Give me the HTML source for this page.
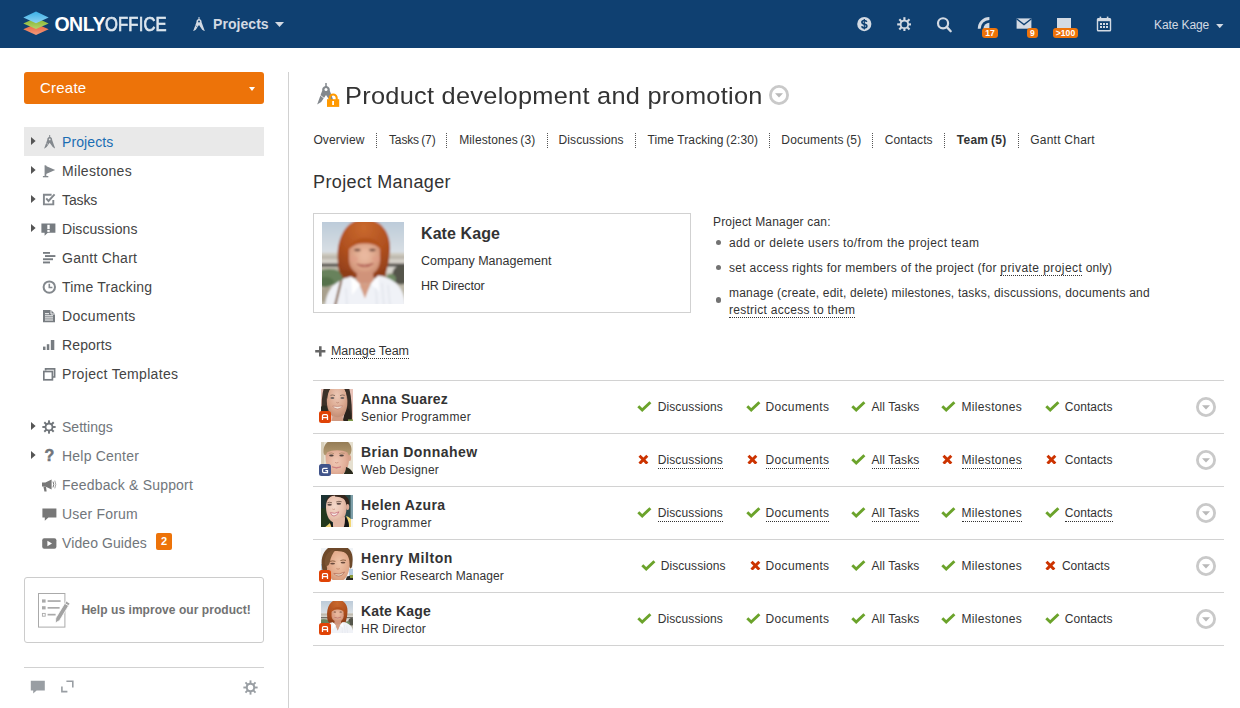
<!DOCTYPE html>
<html lang="en">
<head>
<meta charset="utf-8">
<title>Product development and promotion - Team</title>
<style>
*{box-sizing:border-box;margin:0;padding:0}
html,body{width:1240px;height:708px;overflow:hidden;background:#fff}
body{font-family:"Liberation Sans",sans-serif;color:#333;font-size:12px;position:relative}
a{color:inherit;text-decoration:none}
svg{display:block}
.abs{position:absolute}
/* ---------- top bar ---------- */
#top{position:absolute;left:0;top:0;width:1240px;height:48px;background:#0f4071}
#logo{position:absolute;left:23.4px;top:11.2px}
#logotxt{position:absolute;left:54.4px;top:13px;font-size:19.5px;line-height:22px;color:#fff;font-weight:bold;white-space:nowrap}
#logotxt span{display:inline-block;font-weight:normal;color:#dde6ee;-webkit-text-stroke:0.7px #dde6ee;transform:scaleX(0.85);transform-origin:0 0;letter-spacing:0.2px}
#modname{position:absolute;left:213px;top:14px;font-size:14px;line-height:20px;font-weight:bold;color:#d3dae3;white-space:nowrap}
.caret{position:absolute;width:0;height:0;border-left:4.5px solid transparent;border-right:4.5px solid transparent;border-top:5px solid #d3dae3}
.tb{position:absolute}
.badge{position:absolute;background:#ed7309;color:#fff;font-weight:bold;font-size:8.6px;line-height:10px;height:10px;border-radius:3px;text-align:center;white-space:nowrap}
#uname{position:absolute;left:1154px;top:17px;font-size:12px;line-height:16px;color:#d3dae3;white-space:nowrap}
/* ---------- sidebar ---------- */
#create{position:absolute;left:24px;top:72px;width:240px;height:32px;border-radius:3px;background:#ed7309;color:#fff;font-size:15px;line-height:32px;padding-left:16px}
#create i{position:absolute;right:8.6px;top:15px;width:0;height:0;border-left:3.7px solid transparent;border-right:3.7px solid transparent;border-top:4px solid #fff}
#vline{position:absolute;left:288px;top:72px;width:1px;height:636px;background:#d1d1d1}
.mi{position:absolute;left:24px;width:240px;height:29px;font-size:14px;line-height:29px;color:#444;white-space:nowrap}
.mi.act{background:#e9e9e9;color:#1a6db3}
.mi.g2{color:#71767b}
.mi svg.ar{position:absolute;left:6.9px;top:10px}
.mi svg{position:absolute;left:18px;top:7px}
.mi span{position:absolute;left:38px;top:1px}
.mi i.q{position:absolute;left:20.4px;top:0;font-style:normal;font-weight:bold;font-size:16px;color:#70757a;-webkit-text-stroke:0.5px #70757a;line-height:29px}
.num{position:absolute;background:#ed7309;color:#fff;font-size:11px;font-style:normal;font-weight:bold;line-height:17px;height:17px;width:15.5px;text-align:center;border-radius:2px}
#help{position:absolute;left:24px;top:577px;width:240px;height:66px;border:1px solid #ccc;border-radius:3px}
#help span{position:absolute;left:56.4px;top:24px;font-size:12px;line-height:16px;font-weight:bold;color:#727272;white-space:nowrap}
#sbline{position:absolute;left:24px;top:667px;width:240px;height:1px;background:#d1d1d1}
/* ---------- content ---------- */
#title{transform:scaleX(1.035);transform-origin:0 0;position:absolute;left:345.4px;top:79px;font-size:24.5px;font-weight:normal;line-height:34px;color:#333;white-space:nowrap}
.tab{position:absolute;top:132px;font-size:12px;line-height:16px;color:#333;white-space:nowrap}
.tab.cur{font-weight:bold}
.sep{position:absolute;top:133px;width:0;height:15px;border-left:1px dotted #555}
#pmh{position:absolute;left:313px;top:170px;font-weight:normal;font-size:18px;line-height:24px;color:#333;white-space:nowrap}
#card{position:absolute;left:313px;top:213px;width:378px;height:100px;border:1px solid #d1d1d1;background:#fff}
#card .ph{position:absolute;left:8px;top:8px}
#card .n{position:absolute;left:107px;top:9px;font-size:16px;line-height:22px;font-weight:bold;color:#333;white-space:nowrap}
#card .d{position:absolute;left:107px;font-size:12.5px;line-height:16px;color:#333;white-space:nowrap}
#pmcan{position:absolute;left:713px;top:214px;font-size:12px;line-height:16px;color:#333;white-space:nowrap}
.bl{position:absolute;left:729px;font-size:12px;line-height:17px;color:#333;white-space:nowrap}
.bl u,.dot u{text-decoration:none;border-bottom:1px dotted #333}
.bd{position:absolute;left:715.6px;width:5.6px;height:5.6px;border-radius:50%;background:#727272}
#mt{position:absolute;left:331px;top:343px;font-size:12.5px;line-height:16px;color:#333;white-space:nowrap;border-bottom:1px dotted #333;height:16px}
.hl{position:absolute;left:313px;width:911px;height:1px;background:#d2d2d2}
.row{position:absolute;left:313px;width:911px;height:53px}
.row .av{position:absolute;left:8px;top:9px}
.row .bg{position:absolute;left:6px;top:31px;width:12px;height:12px;border-radius:2.5px}
.row .nm{position:absolute;left:48px;top:10px;font-size:14px;line-height:18px;font-weight:bold;color:#333;white-space:nowrap}
.row .ps{position:absolute;left:48px;top:29px;font-size:12px;line-height:16px;color:#333;white-space:nowrap}
.row .p{position:absolute;top:19px;font-size:12px;line-height:16px;color:#333;white-space:nowrap}
.row .p.l{border-bottom:1px dotted #333;height:16px;line-height:15px;top:19.5px}
.row .ic{position:absolute;top:20.7px}
.row .cb{position:absolute;left:883px;top:17px}
</style>
</head>
<body>
<!-- TOPBAR -->
<div id="top">
  <svg id="logo" width="26" height="24.4" viewBox="0 0 26 24" preserveAspectRatio="none">
    <defs>
      <linearGradient id="lg1" x1="0" y1="0" x2="0" y2="1"><stop offset="0" stop-color="#3bb0e6"/><stop offset="1" stop-color="#8fd3f2"/></linearGradient>
      <linearGradient id="lg2" x1="0" y1="0" x2="0" y2="1"><stop offset="0" stop-color="#7fae2a"/><stop offset="1" stop-color="#b5d56b"/></linearGradient>
      <linearGradient id="lg3" x1="0" y1="0" x2="0" y2="1"><stop offset="0" stop-color="#e5603a"/><stop offset="1" stop-color="#f59a7b"/></linearGradient>
    </defs>
    <path d="M13 12.5 L25.7 18 L13 23.6 L0.3 18 Z" fill="url(#lg3)"/>
    <path d="M13 6.6 L25.7 12.2 L13 17.8 L0.3 12.2 Z" fill="url(#lg2)"/>
    <path d="M13 0.6 L25.7 6.3 L13 12 L0.3 6.3 Z" fill="url(#lg1)"/>
  </svg>
  <div id="logotxt"><b style="letter-spacing:-0.448px">ONLY</b><span>OFFICE</span></div>
  <svg class="tb" style="left:192.7px;top:16.5px" width="12" height="14.6" viewBox="0 0 12 14.5"><path d="M5.5 0 H6.5 V2 C8 2.4 8.8 3.8 8.5 5 L11.9 14.3 L9.2 12.6 L6 8 L2.8 12.6 L0.1 14.3 L3.5 5 C3.2 3.8 4 2.4 5.5 2 Z" fill="#d3dae3"/><circle cx="6" cy="4.5" r="0.95" fill="#0f4071"/><path d="M2.6 8.6 L4.6 10" stroke="#0f4071" stroke-width="0.6"/></svg>
  <div id="modname" style="letter-spacing:0.056px">Projects</div>
  <svg class="tb" style="left:275px;top:22px" width="9" height="5" viewBox="0 0 9 5"><path d="M0 0 H9 L4.5 5 Z" fill="#d3dae3"/></svg>
  <!-- icons -->
  <svg class="tb" style="left:856.6px;top:17.2px" width="15" height="15" viewBox="0 0 15 15"><circle cx="7.3" cy="7.1" r="7.1" fill="#d3dae3"/><path d="M9.7 5 C9.4 3.9 8.3 3.5 7.2 3.5 C5.8 3.5 4.9 4.3 4.9 5.3 C4.9 6.5 6 6.9 7.3 7.2 C8.7 7.5 9.8 7.9 9.8 9.1 C9.8 10.2 8.8 10.9 7.3 10.9 C6 10.9 5 10.4 4.7 9.3" fill="none" stroke="#0f4071" stroke-width="1.7"/><path d="M7.3 1.9 V12.5" stroke="#0f4071" stroke-width="1.2"/></svg>
  <svg class="tb" style="left:896.6px;top:16.7px" width="14.8" height="14.8" viewBox="0 0 16 16"><g fill="#d3dae3"><g id="tth"><rect x="6.85" y="0.2" width="2.3" height="3.4"/><rect x="6.85" y="12.4" width="2.3" height="3.4"/></g><use href="#tth" transform="rotate(45 8 8)"/><use href="#tth" transform="rotate(90 8 8)"/><use href="#tth" transform="rotate(135 8 8)"/></g><circle cx="8" cy="8" r="4.1" fill="none" stroke="#d3dae3" stroke-width="2"/></svg>
  <svg class="tb" style="left:936px;top:16.6px" width="17" height="17" viewBox="0 0 17 17"><circle cx="7.05" cy="6.3" r="5.05" fill="none" stroke="#d3dae3" stroke-width="2.2"/><path d="M10.7 9.9 L14.7 14.2" stroke="#d3dae3" stroke-width="2.3" stroke-linecap="round"/></svg>
  <svg class="tb" style="left:977px;top:17px" width="13" height="12" viewBox="0 0 13 12"><path d="M2.2 11.8 A10.2 10.2 0 0 1 12.4 1.5" fill="none" stroke="#d3dae3" stroke-width="2.9"/><path d="M6.4 11.8 A6 6 0 0 1 12.4 5.8 L12.4 11.8 Z" fill="#d3dae3"/></svg>
  <div class="badge" style="left:982px;top:28px;width:16px">17</div>
  <svg class="tb" style="left:1016px;top:18.2px" width="16" height="11" viewBox="0 0 16 11"><rect x="0.6" y="0.4" width="14.8" height="10.3" fill="#d3dae3"/><path d="M0.5 0.8 L8 6.6 L15.5 0.8" fill="none" stroke="#0f4071" stroke-width="1.3"/></svg>
  <div class="badge" style="left:1027px;top:28px;width:11px">9</div>
  <div class="tb" style="left:1057px;top:18px;width:14px;height:11px;background:#d3dae3"></div>
  <div class="badge" style="left:1053px;top:28px;width:25px">&gt;100</div>
  <svg class="tb" style="left:1096px;top:16px" width="16" height="16" viewBox="0 0 16 16"><rect x="1.5" y="2.6" width="13" height="12.2" rx="0.8" fill="none" stroke="#d3dae3" stroke-width="1.4"/><rect x="1.5" y="2.6" width="13" height="2.6" fill="#d3dae3"/><rect x="3.6" y="0.6" width="1.6" height="3" fill="#d3dae3"/><rect x="10.8" y="0.6" width="1.6" height="3" fill="#d3dae3"/><g fill="#d3dae3"><rect x="4" y="7" width="2" height="2"/><rect x="7" y="7" width="2" height="2"/><rect x="10" y="7" width="2" height="2"/><rect x="4" y="10" width="2" height="2"/><rect x="7" y="10" width="2" height="2"/><rect x="10" y="10" width="2" height="2"/></g></svg>
  <div id="uname" style="letter-spacing:-0.094px">Kate Kage</div>
  <svg class="tb" style="left:1216.2px;top:24.3px" width="7.6" height="4.2" viewBox="0 0 7 4"><path d="M0 0 H7 L3.5 4 Z" fill="#d3dae3"/></svg>
</div>
<!-- SIDEBAR -->
<div id="side">
  <div id="create"><span style="letter-spacing:0.228px">Create</span><i></i></div>
  <div id="vline"></div>
  <div class="mi act" style="top:127px;height:29px"><svg class="ar" width="5" height="8" viewBox="0 0 5 8"><path d="M0 0 L4.6 4 L0 8 Z" fill="#555"/></svg>
    <svg width="11.4" height="14" viewBox="0 0 12 14.5" style="left:19.9px;top:7.9px"><path d="M5.5 0 H6.5 V2 C8 2.4 8.8 3.8 8.5 5 L11.9 14.3 L9.2 12.6 L6 8 L2.8 12.6 L0.1 14.3 L3.5 5 C3.2 3.8 4 2.4 5.5 2 Z" fill="#83888d"/><circle cx="6" cy="4.5" r="0.95" fill="#e9e9e9"/><path d="M2.6 8.6 L4.6 10" stroke="#e9e9e9" stroke-width="0.6"/></svg>
    <span style="letter-spacing:0.103px">Projects</span></div>
  <div class="mi" style="top:156px;height:29px"><svg class="ar" width="5" height="8" viewBox="0 0 5 8"><path d="M0 0 L4.6 4 L0 8 Z" fill="#555"/></svg>
    <svg width="14" height="13" viewBox="0 0 14 13" style="left:18px;top:8.5px"><path d="M2.8 0.4 L13.2 5 L4 9 Z" fill="#83888d"/><rect x="2.6" y="0.4" width="1.7" height="11.4" fill="#83888d"/><rect x="0.9" y="11" width="5.4" height="1.3" fill="#83888d"/></svg>
    <span style="letter-spacing:0.308px">Milestones</span></div>
  <div class="mi" style="top:185px;height:29px"><svg class="ar" width="5" height="8" viewBox="0 0 5 8"><path d="M0 0 L4.6 4 L0 8 Z" fill="#555"/></svg>
    <svg width="14" height="13" viewBox="0 0 14 13" style="left:18px;top:8px"><path d="M9.6 1.8 H1.9 V11.4 H11.3 V7" fill="none" stroke="#83888d" stroke-width="1.9"/><path d="M4.2 5.4 L6.5 8 L12.6 1.4" fill="none" stroke="#83888d" stroke-width="1.9"/></svg>
    <span style="letter-spacing:-0.119px">Tasks</span></div>
  <div class="mi" style="top:214px;height:29px"><svg class="ar" width="5" height="8" viewBox="0 0 5 8"><path d="M0 0 L4.6 4 L0 8 Z" fill="#555"/></svg>
    <svg width="15" height="14" viewBox="0 0 15 14" style="left:17.4px;top:8.6px"><path d="M0.4 0.4 H14.4 V9.8 H6.8 L3.6 12.8 V9.8 H0.4 Z" fill="#777c81"/><rect x="6.3" y="1.8" width="2.4" height="4.4" fill="#fff"/><rect x="6.3" y="7" width="2.4" height="1.9" fill="#fff"/></svg>
    <span style="letter-spacing:0.072px">Discussions</span></div>
  <div class="mi" style="top:243px;height:29px">
    <svg width="13" height="12" viewBox="0 0 13 12" style="left:19px;top:9px"><g fill="#777c81"><rect x="0" y="-0.1" width="7" height="1.9"/><rect x="2" y="3.1" width="10.4" height="1.9"/><rect x="0" y="6.3" width="10" height="1.9"/><rect x="0" y="9.5" width="7" height="1.9"/></g></svg>
    <span style="letter-spacing:0.257px">Gantt Chart</span></div>
  <div class="mi" style="top:272px;height:29px">
    <svg width="14" height="14" viewBox="0 0 14 14" style="top:8px"><circle cx="7.3" cy="7.1" r="5.7" fill="none" stroke="#83888d" stroke-width="2"/><path d="M7.3 3.8 V7.5 H10.4" fill="none" stroke="#83888d" stroke-width="1.6"/></svg>
    <span style="letter-spacing:0.224px">Time Tracking</span></div>
  <div class="mi" style="top:301px;height:29px">
    <svg width="12" height="13" viewBox="0 0 12 13" style="left:19px;top:9px"><path d="M0 0 H8 L12 4 V12.2 H0 Z" fill="#777c81"/><path d="M8 0 V4 H12" fill="none" stroke="#fff" stroke-width="0.9"/><g fill="#fff"><rect x="2" y="5.3" width="8" height="1"/><rect x="2" y="7.4" width="8" height="1"/><rect x="2" y="9.5" width="8" height="1"/><rect x="2" y="3.2" width="4" height="1"/></g></svg>
    <span style="letter-spacing:0.321px">Documents</span></div>
  <div class="mi" style="top:330px;height:29px">
    <svg width="12" height="11" viewBox="0 0 12 11" style="left:19px;top:10px"><g fill="#777c81"><rect x="0" y="6.6" width="2.5" height="3.4"/><rect x="3.8" y="4.2" width="2.5" height="5.8"/><rect x="7.8" y="0" width="3.5" height="10"/></g></svg>
    <span style="letter-spacing:0.138px">Reports</span></div>
  <div class="mi" style="top:359px;height:29px">
    <svg width="13" height="13" viewBox="0 0 13 13" style="left:19px;top:9px"><path d="M2.6 2.6 V0.8 H11.6 V9 H10" fill="none" stroke="#777c81" stroke-width="1.7"/><rect x="0.8" y="3.5" width="8.6" height="8.3" fill="none" stroke="#777c81" stroke-width="1.7"/></svg>
    <span style="letter-spacing:0.311px">Project Templates</span></div>

  <div class="mi g2" style="top:412px;height:29px"><svg class="ar" width="5" height="8" viewBox="0 0 5 8"><path d="M0 0 L4.6 4 L0 8 Z" fill="#555"/></svg>
    <svg width="14" height="14" viewBox="0 0 16 16" style="top:7.8px;left:18.2px"><g fill="#70757a"><g id="gt2"><rect x="6.9" y="0.4" width="2.2" height="3.6"/><rect x="6.9" y="12" width="2.2" height="3.6"/></g><use href="#gt2" transform="rotate(45 8 8)"/><use href="#gt2" transform="rotate(90 8 8)"/><use href="#gt2" transform="rotate(135 8 8)"/></g><circle cx="8" cy="8" r="4" fill="none" stroke="#70757a" stroke-width="2.1"/></svg>
    <span style="letter-spacing:0.026px">Settings</span></div>
  <div class="mi g2" style="top:441px;height:29px"><svg class="ar" width="5" height="8" viewBox="0 0 5 8"><path d="M0 0 L4.6 4 L0 8 Z" fill="#555"/></svg>
    <i class="q">?</i>
    <span style="letter-spacing:0.209px">Help Center</span></div>
  <div class="mi g2" style="top:470px;height:29px">
    <svg width="15" height="13" viewBox="0 0 15 13" style="top:8.5px;left:18px"><path d="M0 3.6 H3.4 L9.6 0.4 V10.4 L3.4 7.4 H0 Z" fill="#777"/><path d="M1.4 7.4 H4 L4.6 12.4 H2.4 Z" fill="#777"/><path d="M11 2.6 Q12.6 5.4 11 8.4" fill="none" stroke="#777" stroke-width="1"/><path d="M12.8 1.6 Q14.8 5.4 12.8 9.4" fill="none" stroke="#999" stroke-width="0.9"/></svg>
    <span style="letter-spacing:0.187px">Feedback &amp; Support</span></div>
  <div class="mi g2" style="top:499px;height:29px">
    <svg width="15" height="14" viewBox="0 0 15 14" style="top:8.5px;left:18px"><path d="M0.4 0.5 H14.4 V9.6 H6.4 L2.8 12.8 V9.6 H0.4 Z" fill="#777"/></svg>
    <span style="letter-spacing:0.199px">User Forum</span></div>
  <div class="mi g2" style="top:528px;height:29px">
    <svg width="15" height="11" viewBox="0 0 15 11" style="top:10px;left:18px"><rect x="0.2" y="0.2" width="14.2" height="10.6" rx="2" fill="#777"/><path d="M5.4 2.8 L10 5.5 L5.4 8.2 Z" fill="#fff"/></svg>
    <span style="letter-spacing:0.091px">Video Guides</span><em class="num" style="left:132.3px;top:5.4px">2</em></div>

  <div id="help">
    <svg class="abs" style="left:13px;top:15px" width="34" height="36" viewBox="0 0 34 36"><rect x="0.5" y="0.5" width="26.4" height="33.6" fill="#fff" stroke="#aaa" stroke-width="1"/><g fill="#aaa"><rect x="4" y="6.4" width="3.6" height="3.2"/><rect x="4" y="13.2" width="3.6" height="3.2"/><rect x="9.6" y="7.2" width="13" height="1.7"/><rect x="9.6" y="14" width="12" height="1.7"/><rect x="9.6" y="20.8" width="8" height="1.7"/></g><rect x="4.4" y="20.4" width="2.8" height="2.8" fill="none" stroke="#aaa" stroke-width="0.9"/><path d="M28.2 8 L32 10.4 L21.6 27.4 L17.4 30 L17.8 25 Z" fill="#a2a2a2" stroke="#fff" stroke-width="0.8"/><path d="M26.8 10.4 L30.6 12.8" stroke="#fff" stroke-width="0.9"/></svg>
    <span style="letter-spacing:0.053px">Help us improve our product!</span>
  </div>
  <div id="sbline"></div>
  <svg class="abs" style="left:30px;top:680px" width="16" height="15" viewBox="0 0 16 15"><path d="M0.8 0.8 H14.8 V10.4 H6.6 L3.2 13.6 V10.4 H0.8 Z" fill="#999ea3"/></svg>
  <svg class="abs" style="left:61px;top:680px" width="13" height="13" viewBox="0 0 13 13"><path d="M5.4 1.2 H11.8 V7.4" fill="none" stroke="#999ea3" stroke-width="1.6"/><path d="M0.9 6.4 V11.6 H6.4" fill="none" stroke="#999ea3" stroke-width="1.6"/></svg>
  <svg class="abs" style="left:243px;top:680px" width="15" height="15" viewBox="0 0 16 16"><g fill="#999ea3"><g id="gt3"><rect x="7" y="0.4" width="2" height="3.6"/><rect x="7" y="12" width="2" height="3.6"/></g><use href="#gt3" transform="rotate(45 8 8)"/><use href="#gt3" transform="rotate(90 8 8)"/><use href="#gt3" transform="rotate(135 8 8)"/></g><circle cx="8" cy="8" r="4" fill="none" stroke="#999ea3" stroke-width="2.2"/></svg>
</div>
<!-- CONTENT -->
<div id="main">
  <svg class="abs" style="left:316.8px;top:83px" width="18" height="21.8" viewBox="0 0 12 14.5"><path d="M5.5 0 H6.5 V2 C8 2.4 8.8 3.8 8.5 5 L11.9 14.3 L9.2 12.6 L6 8 L2.8 12.6 L0.1 14.3 L3.5 5 C3.2 3.8 4 2.4 5.5 2 Z" fill="#83888d"/><circle cx="6" cy="4.4" r="1" fill="#fff"/><path d="M2.2 8.2 L4.8 10.2" stroke="#fff" stroke-width="0.55"/></svg><svg class="abs" style="left:326px;top:92px" width="14" height="16" viewBox="0 0 14 16"><path d="M3.7 8 V6 A3.5 3.5 0 0 1 10.7 6 V8" fill="none" stroke="#ff9900" stroke-width="2.1"/><rect x="1" y="7.2" width="12.2" height="7.7" fill="#ff9900"/><rect x="6.2" y="9" width="1.8" height="4" fill="#fff"/></svg>
  <h1 id="title" style="letter-spacing:0.259px">Product development and promotion</h1>
  <svg class="abs" style="left:769px;top:85px" width="20" height="20" viewBox="0 0 20 20"><circle cx="10" cy="10" r="8.6" fill="none" stroke="#c9c9c9" stroke-width="2.8"/><path d="M6 8.3 H14 L10 12.4 Z" fill="#b9b9b9"/></svg>
  <div id="tabs">
    <a class="tab" style="left:313.4px;letter-spacing:0.136px">Overview</a>
    <i class="sep" style="left:376px"></i>
    <a class="tab" style="left:389px;letter-spacing:-0.139px">Tasks&thinsp;(7)</a>
    <i class="sep" style="left:446px"></i>
    <a class="tab" style="left:459.2px;letter-spacing:0.126px">Milestones&thinsp;(3)</a>
    <i class="sep" style="left:547px"></i>
    <a class="tab" style="left:558.6px;letter-spacing:0.088px">Discussions</a>
    <i class="sep" style="left:635px"></i>
    <a class="tab" style="left:647.5px;letter-spacing:0.092px">Time Tracking&thinsp;(2:30)</a>
    <i class="sep" style="left:769px"></i>
    <a class="tab" style="left:781.3px;letter-spacing:0.18px">Documents&thinsp;(5)</a>
    <i class="sep" style="left:872px"></i>
    <a class="tab" style="left:884.7px;letter-spacing:0.08px">Contacts</a>
    <i class="sep" style="left:944px"></i>
    <a class="tab cur" style="left:956.7px;letter-spacing:0.296px">Team&thinsp;(5)</a>
    <i class="sep" style="left:1018px"></i>
    <a class="tab" style="left:1030.2px;letter-spacing:0.243px">Gantt Chart</a>
  </div>
  <h2 id="pmh" style="letter-spacing:0.395px">Project Manager</h2>
  <div id="card">
    <div class="ph"><svg width="82" height="82" viewBox="0 0 82 82"><defs><filter id="k1" x="-10%" y="-10%" width="120%" height="120%"><feGaussianBlur stdDeviation="0.9"/></filter><linearGradient id="k1s" x1="0" y1="0" x2="0" y2="1"><stop offset="0" stop-color="#b9c9d8"/><stop offset="1" stop-color="#dce1e5"/></linearGradient><radialGradient id="k1g" cx="0.5" cy="0.42" r="0.65"><stop offset="0" stop-color="#ecbfa6"/><stop offset="0.6" stop-color="#dca387"/><stop offset="1" stop-color="#c4846a"/></radialGradient><radialGradient id="k1h" cx="0.5" cy="0.15" r="0.9"><stop offset="0" stop-color="#c9692e"/><stop offset="0.55" stop-color="#b0501f"/><stop offset="1" stop-color="#8e3d18"/></radialGradient><clipPath id="k1c"><rect width="82" height="82"/></clipPath></defs><g clip-path="url(#k1c)"><g filter="url(#k1)"><rect x="-4" y="-4" width="90" height="38" fill="url(#k1s)"/><rect x="-4" y="31" width="90" height="12" fill="#cdc9bf"/><rect x="-4" y="34" width="90" height="2.4" fill="#b9b5aa"/><rect x="-4" y="38.4" width="90" height="2" fill="#d9d6cf"/><rect x="-4" y="41.6" width="90" height="3.2" fill="#514f4b"/><rect x="-4" y="44.8" width="90" height="42" fill="#bdb9aa"/><ellipse cx="7" cy="55" rx="15" ry="8" fill="#67825b"/><ellipse cx="3" cy="60" rx="9" ry="5" fill="#56724c"/><ellipse cx="6" cy="73" rx="10" ry="8" fill="#a8a08d"/><rect x="62" y="45" width="24" height="6" fill="#d8d6cf"/><ellipse cx="79" cy="53" rx="9" ry="9.6" fill="#55544c"/><ellipse cx="69" cy="57" rx="5" ry="5" fill="#6f8a64"/><path d="M16 42 C13 14 26 -3 42 -3 C60 -3 71 12 67.4 34 C66.6 46 63 54 57 56 L23 56 C17 52 16 47 16 42 Z" fill="url(#k1h)"/><path d="M18 48 L21 57 L25 52 L28 58 L31 50 Z M54 52 L57 58 L60 52 L63 56 L65 46 Z" fill="#8e3d18"/><path d="M27 28 C27 21 34 19.4 43 19.4 C52 19.4 58 21 58 28 L58 38 C58 48 51 53.4 43 53.4 C34 53.4 27 47 27 38 Z" fill="url(#k1g)"/><path d="M24.6 31 C26 20 36 16 44 16 C52 16 59 19 60.6 30 C57 23.4 50 21.4 43 21.6 C36 21.6 28.6 23 24.6 31 Z" fill="#b4531f"/><ellipse cx="42.6" cy="32" rx="3" ry="5" fill="#e9b79d" opacity="0.8"/><path d="M34.6 42 Q43 47.6 51.4 41.4 Q43 44.6 34.6 42 Z" fill="#f2e0d6" stroke="#b5665a" stroke-width="1.2"/><ellipse cx="35.4" cy="28" rx="3.2" ry="1.3" fill="#6f4a3c"/><ellipse cx="50.4" cy="28" rx="3.2" ry="1.3" fill="#6f4a3c"/><ellipse cx="32" cy="37" rx="4" ry="3" fill="#e09a86" opacity="0.55"/><ellipse cx="54" cy="37" rx="4" ry="3" fill="#e09a86" opacity="0.55"/><path d="M35 50 L51 50 L52 61 L34 61 Z" fill="#d0937a"/><path d="M3 86 C4 66 14 59 29 54.6 L36 60 L42.6 75 L50 60 L56.4 53.6 C70 56.4 82 62 84 86 Z" fill="#f0f2f7"/><path d="M29 54.6 L38.4 62.4 L30 73 Z" fill="#ffffff"/><path d="M56.4 53.6 L49 62 L57 70 Z" fill="#fbfcff"/><path d="M36.4 58.6 L43 76.4 L49.6 58.6 C46 62.4 40 62.4 36.4 58.6 Z" fill="#d69d84"/><path d="M19.4 58 L13 84" stroke="#8a6a55" stroke-width="2.3"/><path d="M60 61 L62 84 M66 63 L68 84 M54 66 L55 84 M24 66 L25 84" stroke="#dde1e8" stroke-width="1.1"/></g></g></svg></div>
    <div class="n" style="letter-spacing:0.083px">Kate Kage</div>
    <div class="d" style="top:39px;letter-spacing:0.026px">Company Management</div>
    <div class="d" style="top:64px;letter-spacing:-0.154px">HR Director</div>
  </div>
  <div id="pmcan" style="letter-spacing:0.182px">Project Manager can:</div>
  <i class="bd" style="top:239.8px"></i><div class="bl" style="top:235px;letter-spacing:0.4px">add or delete users to/from the project team</div>
  <i class="bd" style="top:264.8px"></i><div class="bl" style="top:260px"><span style="letter-spacing:0.277px">set access rights for members of the project (for </span><u style="letter-spacing:0.442px">private project</u><span style="letter-spacing:0.076px"> only)</span></div>
  <i class="bd" style="top:297.4px"></i><div class="bl" style="top:285px;letter-spacing:0.194px">manage (create, edit, delete) milestones, tasks, discussions, documents and</div>
  <div class="bl" style="top:302px"><u style="letter-spacing:0.268px">restrict access to them</u></div>
  <svg class="abs" style="left:315px;top:346px" width="11" height="11" viewBox="0 0 11 11"><path d="M5.3 0.2 V10.4 M0.2 5.3 H10.4" stroke="#666" stroke-width="2.6"/></svg>
  <a id="mt" style="letter-spacing:-0.1px">Manage Team</a>
  <i class="hl" style="top:380px"></i>
  <div class="row" style="top:380px">
    <div class="av"><svg width="32" height="32" viewBox="0 0 32 32"><defs><filter id="a1" x="-10%" y="-10%" width="120%" height="120%"><feGaussianBlur stdDeviation="0.6"/></filter><clipPath id="a1c"><rect width="32" height="32"/></clipPath><radialGradient id="a1g" cx="0.5" cy="0.3" r="0.7"><stop offset="0" stop-color="#ecc8b6"/><stop offset="0.6" stop-color="#dba88f"/><stop offset="1" stop-color="#bf8a72"/></radialGradient></defs><g clip-path="url(#a1c)"><g filter="url(#a1)"><rect x="-2" y="-2" width="36" height="36" fill="#e8c2b8"/><path d="M3 -2 C1 6 0 14 1 24 L8 24 L9 8 L13 -2 Z" fill="#3d3129"/><path d="M20 -2 L25 6 L25 20 L22 34 L31 34 C31 22 31 10 28 -2 Z" fill="#382d26"/><ellipse cx="3" cy="20.5" rx="3.6" ry="4" fill="#2b2a20"/><path d="M25 18 C30 20 31 28 29 34 L21 34 C23 28 24 22 25 18 Z" fill="#2a231d"/><path d="M5.8 12 C5.8 3 9 -3 16.5 -3 C24 -3 26.4 4 26.4 13 C26.4 23 22 29.5 16.5 29.5 C11 29.5 5.8 22 5.8 12 Z" fill="url(#a1g)"/><path d="M10 -2 C8 1 6.6 5 6.2 10 C4.6 4 6 0 8 -2 Z" fill="#3d3129"/><path d="M22 -2 C25 1 26 6 26 11 C28 4 26.6 0 24 -2 Z" fill="#382d26"/><ellipse cx="11.4" cy="9" rx="2" ry="0.9" fill="#6d625f"/><ellipse cx="21.4" cy="9" rx="2" ry="0.9" fill="#6d625f"/><path d="M9.4 6.4 Q11.6 5.4 14 6.6 M19 6.6 Q21.4 5.4 23.8 6.4" stroke="#7a6254" stroke-width="0.8" fill="none"/><path d="M15.4 13.4 Q16.6 14.4 17.8 13.4" stroke="#b98370" stroke-width="0.8" fill="none"/><path d="M11.6 17 Q16.5 18 21.6 16.8 Q20 20 16.5 20 Q13 20 11.6 17 Z" fill="#f1e1d6" stroke="#b9786a" stroke-width="0.6"/><path d="M12 26 C14 29 19 29 21 26 L23 34 L10 34 Z" fill="#cf9a82"/><rect x="27" y="30.4" width="6" height="3" fill="#7f9a4a"/></g></g></svg></div>
    <span class="bg" style="background:#e04306"><svg width="12" height="12" viewBox="0 0 12 12"><path d="M3.5 9 V4.8 Q3.5 3.7 4.6 3.7 H7.4 Q8.5 3.7 8.5 4.8 V9 M3.5 6.7 H8.5" fill="none" stroke="#fff" stroke-width="1.25"/></svg></span>
    <div class="nm" style="letter-spacing:0.199px">Anna Suarez</div>
    <div class="ps" style="letter-spacing:0.312px">Senior Programmer</div>
    <svg class="ic" style="left:323.7px" width="15" height="11" viewBox="0 0 15 11"><path d="M1.3 5.3 L5.2 9 L13.4 1.2" fill="none" stroke="#6ba32b" stroke-width="2.9"/></svg>
    <a class="p" style="left:344.7px;letter-spacing:0.115px">Discussions</a>
    <svg class="ic" style="left:432.6px" width="15" height="11" viewBox="0 0 15 11"><path d="M1.3 5.3 L5.2 9 L13.4 1.2" fill="none" stroke="#6ba32b" stroke-width="2.9"/></svg>
    <a class="p" style="left:452.5px;letter-spacing:0.344px">Documents</a>
    <svg class="ic" style="left:537.9px" width="15" height="11" viewBox="0 0 15 11"><path d="M1.3 5.3 L5.2 9 L13.4 1.2" fill="none" stroke="#6ba32b" stroke-width="2.9"/></svg>
    <a class="p" style="left:558.5px;letter-spacing:0.073px">All Tasks</a>
    <svg class="ic" style="left:628.2px" width="15" height="11" viewBox="0 0 15 11"><path d="M1.3 5.3 L5.2 9 L13.4 1.2" fill="none" stroke="#6ba32b" stroke-width="2.9"/></svg>
    <a class="p" style="left:648.5px;letter-spacing:0.334px">Milestones</a>
    <svg class="ic" style="left:731.5px" width="15" height="11" viewBox="0 0 15 11"><path d="M1.3 5.3 L5.2 9 L13.4 1.2" fill="none" stroke="#6ba32b" stroke-width="2.9"/></svg>
    <a class="p" style="left:751.7px;letter-spacing:0.068px">Contacts</a>
    <svg class="cb" width="20" height="20" viewBox="0 0 20 20"><circle cx="10" cy="10" r="8.6" fill="none" stroke="#c9c9c9" stroke-width="2.8"/><path d="M6 8.3 H14 L10 12.4 Z" fill="#b9b9b9"/></svg>
  </div>
  <i class="hl" style="top:433px"></i>
  <div class="row" style="top:433px">
    <div class="av"><svg width="32" height="32" viewBox="0 0 32 32"><defs><filter id="b1" x="-10%" y="-10%" width="120%" height="120%"><feGaussianBlur stdDeviation="0.6"/></filter><clipPath id="b1c"><rect width="32" height="32"/></clipPath><radialGradient id="b1g" cx="0.45" cy="0.45" r="0.65"><stop offset="0" stop-color="#f0c9b6"/><stop offset="0.6" stop-color="#e3b09a"/><stop offset="1" stop-color="#cf977f"/></radialGradient><linearGradient id="b1h" x1="0" y1="0" x2="0" y2="1"><stop offset="0" stop-color="#8d7550"/><stop offset="1" stop-color="#b59b72"/></linearGradient></defs><g clip-path="url(#b1c)"><g filter="url(#b1)"><rect x="-2" y="-2" width="36" height="36" fill="#e6e0d0"/><rect x="-2" y="-2" width="5" height="36" fill="#d8d0bc"/><path d="M4.6 15 C4.2 9 6 7 8 8 L25 8 C27.4 7 28.6 10 28 16 C28.4 25 24 34 16 34 C9 34 4.6 25 4.6 15 Z" fill="url(#b1g)"/><ellipse cx="28.6" cy="16" rx="1.5" ry="3" fill="#d9a28c"/><path d="M2.6 11 C1.6 3 7 -3 16 -3 C25 -3 31.4 1 30.4 9 C29.6 14 27.4 15 26.6 10.6 C21 7.4 11 7.6 6 10.4 C5 14 3.4 14 2.6 11 Z" fill="url(#b1h)"/><ellipse cx="10.4" cy="13.4" rx="2.3" ry="1" fill="#4f423d"/><ellipse cx="20.6" cy="13.4" rx="2.3" ry="1" fill="#4f423d"/><path d="M7.6 11.4 Q10.4 10.4 13 11.6 M18 11.6 Q20.6 10.4 23.6 11.4" stroke="#a58562" stroke-width="0.7" fill="none"/><path d="M14 20.4 Q15.6 21.6 17.4 20.4" stroke="#c88f7c" stroke-width="0.8" fill="none"/><path d="M11 24.8 Q15.4 26.4 20 24.8 Q15.4 27.6 11 24.8 Z" fill="#c97a7c" stroke="#c97a7c" stroke-width="0.6"/><path d="M25 25 C28 26 32 28.6 33 34 L21 34 C24 31 25 28 25 25 Z" fill="#29291f"/><path d="M7 30 L11 34 L4 34 Z" fill="#3a382c"/></g></g></svg></div>
    <span class="bg" style="background:#41548a"><svg width="12" height="12" viewBox="0 0 12 12"><path d="M8.6 4.3 H4.7 Q3.6 4.3 3.6 5.4 V7.4 Q3.6 8.5 4.7 8.5 H8.5 V6.5 H6.4" fill="none" stroke="#fff" stroke-width="1.25"/></svg></span>
    <div class="nm" style="letter-spacing:0.431px">Brian Donnahew</div>
    <div class="ps" style="letter-spacing:0.181px">Web Designer</div>
    <svg class="ic" style="left:324.9px" width="11" height="10" viewBox="0 -0.7 11 10"><path d="M1.5 1.1 L9.3 8.9 M9.3 1.1 L1.5 8.9" fill="none" stroke="#cc3300" stroke-width="2.9"/></svg>
    <a class="p l" style="left:344.7px;letter-spacing:0.115px">Discussions</a>
    <svg class="ic" style="left:433.8px" width="11" height="10" viewBox="0 -0.7 11 10"><path d="M1.5 1.1 L9.3 8.9 M9.3 1.1 L1.5 8.9" fill="none" stroke="#cc3300" stroke-width="2.9"/></svg>
    <a class="p l" style="left:452.5px;letter-spacing:0.344px">Documents</a>
    <svg class="ic" style="left:537.9px" width="15" height="11" viewBox="0 0 15 11"><path d="M1.3 5.3 L5.2 9 L13.4 1.2" fill="none" stroke="#6ba32b" stroke-width="2.9"/></svg>
    <a class="p l" style="left:558.5px;letter-spacing:0.073px">All Tasks</a>
    <svg class="ic" style="left:629.4px" width="11" height="10" viewBox="0 -0.7 11 10"><path d="M1.5 1.1 L9.3 8.9 M9.3 1.1 L1.5 8.9" fill="none" stroke="#cc3300" stroke-width="2.9"/></svg>
    <a class="p l" style="left:648.5px;letter-spacing:0.334px">Milestones</a>
    <svg class="ic" style="left:732.7px" width="11" height="10" viewBox="0 -0.7 11 10"><path d="M1.5 1.1 L9.3 8.9 M9.3 1.1 L1.5 8.9" fill="none" stroke="#cc3300" stroke-width="2.9"/></svg>
    <a class="p" style="left:751.7px;letter-spacing:0.068px">Contacts</a>
    <svg class="cb" width="20" height="20" viewBox="0 0 20 20"><circle cx="10" cy="10" r="8.6" fill="none" stroke="#c9c9c9" stroke-width="2.8"/><path d="M6 8.3 H14 L10 12.4 Z" fill="#b9b9b9"/></svg>
  </div>
  <i class="hl" style="top:486px"></i>
  <div class="row" style="top:486px">
    <div class="av"><svg width="32" height="32" viewBox="0 0 32 32"><defs><filter id="h1" x="-10%" y="-10%" width="120%" height="120%"><feGaussianBlur stdDeviation="0.6"/></filter><clipPath id="h1c"><rect width="32" height="32"/></clipPath><radialGradient id="h1g" cx="0.42" cy="0.4" r="0.7"><stop offset="0" stop-color="#f4d8ca"/><stop offset="0.6" stop-color="#e8c0ad"/><stop offset="1" stop-color="#cf9f8a"/></radialGradient></defs><g clip-path="url(#h1c)"><g filter="url(#h1)"><rect x="-2" y="-2" width="36" height="36" fill="#1b3232"/><rect x="24" y="-2" width="10" height="28" fill="#2c4a4a"/><rect x="29.6" y="-2" width="3" height="27" fill="#7fa0aa"/><ellipse cx="3" cy="24" rx="8" ry="11" fill="#21371e"/><path d="M5 8 C6 -3 20 -4 26 2 C29.6 6 28.6 12 26.4 15 L23 5 L9 5 Z" fill="#35271f"/><path d="M5 12 C5 3 10 0.4 15 0.4 C21.4 0.4 25.4 4 25.4 12 C26 21 21 28 15 28 C9 28 5 21 5 12 Z" fill="url(#h1g)"/><path d="M14 0 C19 -1 24 1 26 7 C23 3 19 1.6 14 1.4 Z" fill="#35271f"/><ellipse cx="26.6" cy="12" rx="1.6" ry="3" fill="#dba995"/><ellipse cx="8.6" cy="9.8" rx="2.2" ry="1" fill="#5d4a44"/><ellipse cx="17.8" cy="8.8" rx="2.3" ry="1" fill="#5d4a44"/><path d="M6.4 7.8 Q8.6 6.8 11 7.8 M15.2 7 Q17.8 5.8 20.6 6.8" stroke="#5a4237" stroke-width="0.7" fill="none"/><path d="M11.4 14 Q12.6 15 14 14" stroke="#c99683" stroke-width="0.8" fill="none"/><path d="M9.4 17.6 Q13.6 19.4 18 16.8 Q16 21 13 21 Q10.4 21 9.4 17.6 Z" fill="#f6ece6" stroke="#c76f7c" stroke-width="0.8"/><path d="M12 25 L24 22 L26 34 L12 34 Z" fill="#e2b7a4"/><path d="M25 21 C29 22 32 25 34 34 L28 34 C28 28 27 24 25 21 Z" fill="#f2d672"/><path d="M24 22 C27 24 28 28 28 34 L22 34 C24 30 24 26 24 22 Z" fill="#141414"/><path d="M10 26 L13 34 L6 34 Z" fill="#141414"/><path d="M9 28 L11 34 L2 34 Z" fill="#f2d672"/><rect x="30" y="24" width="4" height="10" fill="#f4f4f0"/></g></g></svg></div>
    <div class="nm" style="letter-spacing:0.374px">Helen Azura</div>
    <div class="ps" style="letter-spacing:0.431px">Programmer</div>
    <svg class="ic" style="left:323.7px" width="15" height="11" viewBox="0 0 15 11"><path d="M1.3 5.3 L5.2 9 L13.4 1.2" fill="none" stroke="#6ba32b" stroke-width="2.9"/></svg>
    <a class="p l" style="left:344.7px;letter-spacing:0.115px">Discussions</a>
    <svg class="ic" style="left:432.6px" width="15" height="11" viewBox="0 0 15 11"><path d="M1.3 5.3 L5.2 9 L13.4 1.2" fill="none" stroke="#6ba32b" stroke-width="2.9"/></svg>
    <a class="p l" style="left:452.5px;letter-spacing:0.344px">Documents</a>
    <svg class="ic" style="left:537.9px" width="15" height="11" viewBox="0 0 15 11"><path d="M1.3 5.3 L5.2 9 L13.4 1.2" fill="none" stroke="#6ba32b" stroke-width="2.9"/></svg>
    <a class="p l" style="left:558.5px;letter-spacing:0.073px">All Tasks</a>
    <svg class="ic" style="left:628.2px" width="15" height="11" viewBox="0 0 15 11"><path d="M1.3 5.3 L5.2 9 L13.4 1.2" fill="none" stroke="#6ba32b" stroke-width="2.9"/></svg>
    <a class="p l" style="left:648.5px;letter-spacing:0.334px">Milestones</a>
    <svg class="ic" style="left:731.5px" width="15" height="11" viewBox="0 0 15 11"><path d="M1.3 5.3 L5.2 9 L13.4 1.2" fill="none" stroke="#6ba32b" stroke-width="2.9"/></svg>
    <a class="p l" style="left:751.7px;letter-spacing:0.068px">Contacts</a>
    <svg class="cb" width="20" height="20" viewBox="0 0 20 20"><circle cx="10" cy="10" r="8.6" fill="none" stroke="#c9c9c9" stroke-width="2.8"/><path d="M6 8.3 H14 L10 12.4 Z" fill="#b9b9b9"/></svg>
  </div>
  <i class="hl" style="top:539px"></i>
  <div class="row" style="top:539px">
    <div class="av"><svg width="32" height="32" viewBox="0 0 32 32"><defs><filter id="h2" x="-10%" y="-10%" width="120%" height="120%"><feGaussianBlur stdDeviation="0.6"/></filter><clipPath id="h2c"><rect width="32" height="32"/></clipPath><radialGradient id="h2g" cx="0.55" cy="0.4" r="0.7"><stop offset="0" stop-color="#f0c6ab"/><stop offset="0.6" stop-color="#e2a98a"/><stop offset="1" stop-color="#c88c6c"/></radialGradient></defs><g clip-path="url(#h2c)"><g filter="url(#h2)"><rect x="-2" y="-2" width="36" height="36" fill="#f0f3f6"/><rect x="-2" y="16" width="8" height="9" fill="#b7cde1"/><rect x="28" y="21" width="6" height="7" fill="#b7cde1"/><path d="M1 19 C-1 7 5 -3 17 -3 C27 -3 33 3 31.4 15 C31.4 21 29 22 28 18 L26 8 L10 8 L6 23 C3 25 1 23 1 19 Z" fill="#6d482a"/><path d="M5.6 15 C6 6 11 2.4 17 2.4 C24 2.4 28.6 7 28.6 16 C28.6 26 24 34 17 34 C10 34 5.6 25 5.6 15 Z" fill="url(#h2g)"/><path d="M3.6 15 C3.6 6 9 1.4 15 1.4 C11.6 5 9.6 9 8.6 15 C7.6 19 3.6 19 3.6 15 Z" fill="#7a5232"/><path d="M12 3 C16 -0.6 25 0.4 29 7 C24 3 17 3 12 3 Z" fill="#6d482a"/><ellipse cx="11.6" cy="15.6" rx="2.4" ry="0.9" fill="#6b4c3e"/><ellipse cx="22" cy="14.6" rx="2.4" ry="0.9" fill="#6b4c3e"/><path d="M9 13.4 Q11.6 12.4 14.4 13.4 M19.4 12.6 Q22 11.4 25 12.4" stroke="#7a5232" stroke-width="0.8" fill="none"/><path d="M15.4 20.6 Q17 21.8 18.8 20.6" stroke="#c48a6c" stroke-width="0.9" fill="none"/><path d="M12.8 25.4 Q18 27.2 23.6 24 Q21.6 28.2 17.8 28.2 Q14.4 28.2 12.8 25.4 Z" fill="#e6d0bc" stroke="#b06a54" stroke-width="0.7"/><path d="M26 28.6 L34 26.4 L34 34 L24 34 Z" fill="#2b2b26"/><rect x="29" y="27" width="5" height="3" fill="#8a9a3a"/></g></g></svg></div>
    <span class="bg" style="background:#e04306"><svg width="12" height="12" viewBox="0 0 12 12"><path d="M3.5 9 V4.8 Q3.5 3.7 4.6 3.7 H7.4 Q8.5 3.7 8.5 4.8 V9 M3.5 6.7 H8.5" fill="none" stroke="#fff" stroke-width="1.25"/></svg></span>
    <div class="nm" style="letter-spacing:0.602px">Henry Milton</div>
    <div class="ps" style="letter-spacing:0.127px">Senior Research Manager</div>
    <svg class="ic" style="left:327.5px" width="15" height="11" viewBox="0 0 15 11"><path d="M1.3 5.3 L5.2 9 L13.4 1.2" fill="none" stroke="#6ba32b" stroke-width="2.9"/></svg>
    <a class="p" style="left:347.8px;letter-spacing:0.061px">Discussions</a>
    <svg class="ic" style="left:436.6px" width="11" height="10" viewBox="0 -0.7 11 10"><path d="M1.5 1.1 L9.3 8.9 M9.3 1.1 L1.5 8.9" fill="none" stroke="#cc3300" stroke-width="2.9"/></svg>
    <a class="p" style="left:452.5px;letter-spacing:0.366px">Documents</a>
    <svg class="ic" style="left:537.9px" width="15" height="11" viewBox="0 0 15 11"><path d="M1.3 5.3 L5.2 9 L13.4 1.2" fill="none" stroke="#6ba32b" stroke-width="2.9"/></svg>
    <a class="p" style="left:558.5px;letter-spacing:0.073px">All Tasks</a>
    <svg class="ic" style="left:628.2px" width="15" height="11" viewBox="0 0 15 11"><path d="M1.3 5.3 L5.2 9 L13.4 1.2" fill="none" stroke="#6ba32b" stroke-width="2.9"/></svg>
    <a class="p" style="left:648.5px;letter-spacing:0.334px">Milestones</a>
    <svg class="ic" style="left:732.3px" width="11" height="10" viewBox="0 -0.7 11 10"><path d="M1.5 1.1 L9.3 8.9 M9.3 1.1 L1.5 8.9" fill="none" stroke="#cc3300" stroke-width="2.9"/></svg>
    <a class="p" style="left:748.9px;letter-spacing:0.055px">Contacts</a>
    <svg class="cb" width="20" height="20" viewBox="0 0 20 20"><circle cx="10" cy="10" r="8.6" fill="none" stroke="#c9c9c9" stroke-width="2.8"/><path d="M6 8.3 H14 L10 12.4 Z" fill="#b9b9b9"/></svg>
  </div>
  <i class="hl" style="top:592px"></i>
  <div class="row" style="top:592px">
    <div class="av"><svg width="32" height="32" viewBox="0 0 82 82"><defs><filter id="k2" x="-10%" y="-10%" width="120%" height="120%"><feGaussianBlur stdDeviation="1.3"/></filter><linearGradient id="k2s" x1="0" y1="0" x2="0" y2="1"><stop offset="0" stop-color="#b9c9d8"/><stop offset="1" stop-color="#dce1e5"/></linearGradient><radialGradient id="k2g" cx="0.5" cy="0.42" r="0.65"><stop offset="0" stop-color="#ecbfa6"/><stop offset="0.6" stop-color="#dca387"/><stop offset="1" stop-color="#c4846a"/></radialGradient><radialGradient id="k2h" cx="0.5" cy="0.15" r="0.9"><stop offset="0" stop-color="#c9692e"/><stop offset="0.55" stop-color="#b0501f"/><stop offset="1" stop-color="#8e3d18"/></radialGradient><clipPath id="k2c"><rect width="82" height="82"/></clipPath></defs><g clip-path="url(#k2c)"><g filter="url(#k2)"><rect x="-4" y="-4" width="90" height="38" fill="url(#k2s)"/><rect x="-4" y="31" width="90" height="12" fill="#cdc9bf"/><rect x="-4" y="34" width="90" height="2.4" fill="#b9b5aa"/><rect x="-4" y="38.4" width="90" height="2" fill="#d9d6cf"/><rect x="-4" y="41.6" width="90" height="3.2" fill="#514f4b"/><rect x="-4" y="44.8" width="90" height="42" fill="#bdb9aa"/><ellipse cx="7" cy="55" rx="15" ry="8" fill="#67825b"/><ellipse cx="3" cy="60" rx="9" ry="5" fill="#56724c"/><ellipse cx="6" cy="73" rx="10" ry="8" fill="#a8a08d"/><rect x="62" y="45" width="24" height="6" fill="#d8d6cf"/><ellipse cx="79" cy="53" rx="9" ry="9.6" fill="#55544c"/><ellipse cx="69" cy="57" rx="5" ry="5" fill="#6f8a64"/><path d="M16 42 C13 14 26 -3 42 -3 C60 -3 71 12 67.4 34 C66.6 46 63 54 57 56 L23 56 C17 52 16 47 16 42 Z" fill="url(#k2h)"/><path d="M18 48 L21 57 L25 52 L28 58 L31 50 Z M54 52 L57 58 L60 52 L63 56 L65 46 Z" fill="#8e3d18"/><path d="M27 28 C27 21 34 19.4 43 19.4 C52 19.4 58 21 58 28 L58 38 C58 48 51 53.4 43 53.4 C34 53.4 27 47 27 38 Z" fill="url(#k2g)"/><path d="M24.6 31 C26 20 36 16 44 16 C52 16 59 19 60.6 30 C57 23.4 50 21.4 43 21.6 C36 21.6 28.6 23 24.6 31 Z" fill="#b4531f"/><ellipse cx="42.6" cy="32" rx="3" ry="5" fill="#e9b79d" opacity="0.8"/><path d="M34.6 42 Q43 47.6 51.4 41.4 Q43 44.6 34.6 42 Z" fill="#f2e0d6" stroke="#b5665a" stroke-width="1.2"/><ellipse cx="35.4" cy="28" rx="3.2" ry="1.3" fill="#6f4a3c"/><ellipse cx="50.4" cy="28" rx="3.2" ry="1.3" fill="#6f4a3c"/><ellipse cx="32" cy="37" rx="4" ry="3" fill="#e09a86" opacity="0.55"/><ellipse cx="54" cy="37" rx="4" ry="3" fill="#e09a86" opacity="0.55"/><path d="M35 50 L51 50 L52 61 L34 61 Z" fill="#d0937a"/><path d="M3 86 C4 66 14 59 29 54.6 L36 60 L42.6 75 L50 60 L56.4 53.6 C70 56.4 82 62 84 86 Z" fill="#f0f2f7"/><path d="M29 54.6 L38.4 62.4 L30 73 Z" fill="#ffffff"/><path d="M56.4 53.6 L49 62 L57 70 Z" fill="#fbfcff"/><path d="M36.4 58.6 L43 76.4 L49.6 58.6 C46 62.4 40 62.4 36.4 58.6 Z" fill="#d69d84"/><path d="M19.4 58 L13 84" stroke="#8a6a55" stroke-width="2.3"/><path d="M60 61 L62 84 M66 63 L68 84 M54 66 L55 84 M24 66 L25 84" stroke="#dde1e8" stroke-width="1.1"/></g></g></svg></div>
    <span class="bg" style="background:#e04306"><svg width="12" height="12" viewBox="0 0 12 12"><path d="M3.5 9 V4.8 Q3.5 3.7 4.6 3.7 H7.4 Q8.5 3.7 8.5 4.8 V9 M3.5 6.7 H8.5" fill="none" stroke="#fff" stroke-width="1.25"/></svg></span>
    <div class="nm" style="letter-spacing:0.17px">Kate Kage</div>
    <div class="ps" style="letter-spacing:0.212px">HR Director</div>
    <svg class="ic" style="left:323.7px" width="15" height="11" viewBox="0 0 15 11"><path d="M1.3 5.3 L5.2 9 L13.4 1.2" fill="none" stroke="#6ba32b" stroke-width="2.9"/></svg>
    <a class="p" style="left:344.7px;letter-spacing:0.115px">Discussions</a>
    <svg class="ic" style="left:432.6px" width="15" height="11" viewBox="0 0 15 11"><path d="M1.3 5.3 L5.2 9 L13.4 1.2" fill="none" stroke="#6ba32b" stroke-width="2.9"/></svg>
    <a class="p" style="left:452.5px;letter-spacing:0.344px">Documents</a>
    <svg class="ic" style="left:537.9px" width="15" height="11" viewBox="0 0 15 11"><path d="M1.3 5.3 L5.2 9 L13.4 1.2" fill="none" stroke="#6ba32b" stroke-width="2.9"/></svg>
    <a class="p" style="left:558.5px;letter-spacing:0.073px">All Tasks</a>
    <svg class="ic" style="left:628.2px" width="15" height="11" viewBox="0 0 15 11"><path d="M1.3 5.3 L5.2 9 L13.4 1.2" fill="none" stroke="#6ba32b" stroke-width="2.9"/></svg>
    <a class="p" style="left:648.5px;letter-spacing:0.334px">Milestones</a>
    <svg class="ic" style="left:731.5px" width="15" height="11" viewBox="0 0 15 11"><path d="M1.3 5.3 L5.2 9 L13.4 1.2" fill="none" stroke="#6ba32b" stroke-width="2.9"/></svg>
    <a class="p" style="left:751.7px;letter-spacing:0.068px">Contacts</a>
    <svg class="cb" width="20" height="20" viewBox="0 0 20 20"><circle cx="10" cy="10" r="8.6" fill="none" stroke="#c9c9c9" stroke-width="2.8"/><path d="M6 8.3 H14 L10 12.4 Z" fill="#b9b9b9"/></svg>
  </div>
  <i class="hl" style="top:645px"></i>
</div>
</body>
</html>
